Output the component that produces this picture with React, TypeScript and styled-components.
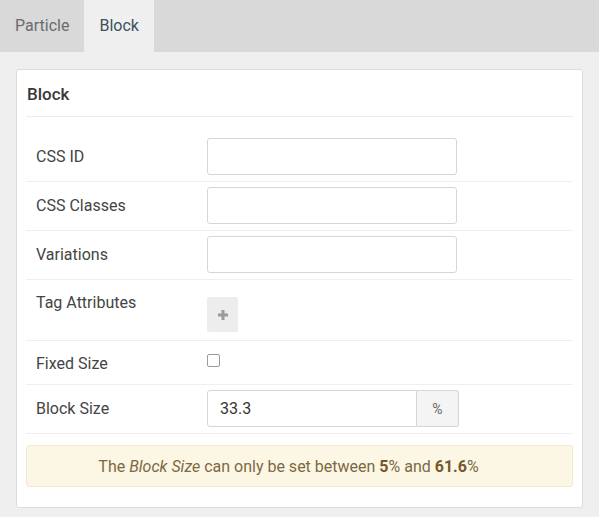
import styled, { createGlobalStyle } from 'styled-components';

const GlobalStyle = createGlobalStyle`
  html, body {
    margin: 0;
    padding: 0;
    background: #efefef;
    font-family: Roboto, "Liberation Sans", Arial, sans-serif;
  }
`;

const TabBar = styled.div`
  display: flex;
  height: 52px;
  background: #d9d9d9;
`;

const Tab = styled.div<{ $active?: boolean }>`
  padding: 0 15px;
  line-height: 52px;
  font-size: 16px;
  color: ${(p) => (p.$active ? '#3b4f5e' : '#6b6b6b')};
  background: ${(p) => (p.$active ? '#efefef' : 'transparent')};
`;

const Content = styled.div`
  padding: 17px 16px 10px;
`;

const Card = styled.div`
  background: #fff;
  border: 1px solid #dcdcdc;
  border-radius: 3px;
  padding: 0 9px 20px;
`;

const CardHeader = styled.div`
  height: 47px;
  display: flex;
  align-items: center;
  padding: 1px 0 0 1px;
  box-sizing: border-box;
  border-bottom: 1px solid #ebebeb;
  font-size: 17px;
  font-weight: 500;
  color: #383838;
`;

const Form = styled.div`
  padding-top: 16px;
`;

const Row = styled.div<{ $top?: boolean; $pad?: string }>`
  display: flex;
  align-items: ${(p) => (p.$top ? 'flex-start' : 'center')};
  padding: ${(p) => p.$pad || '5px 10px 6px'};
  border-bottom: 1px solid #efefef;
`;

const Label = styled.div`
  width: 171px;
  flex-shrink: 0;
  font-size: 16px;
  line-height: 20px;
  color: #444;
`;

const Input = styled.input`
  box-sizing: border-box;
  width: 250px;
  height: 37px;
  padding: 0 12px;
  border: 1px solid #d6d6d6;
  border-radius: 3px;
  font-family: inherit;
  font-size: 16px;
  color: #333;
  outline: none;
`;

const Group = styled.div`
  display: flex;
`;

const GroupInput = styled(Input)`
  width: 210px;
  border-radius: 3px 0 0 3px;
`;

const Addon = styled.div`
  box-sizing: border-box;
  width: 42px;
  height: 37px;
  display: flex;
  align-items: center;
  justify-content: center;
  background: #f4f4f4;
  border: 1px solid #d6d6d6;
  border-left: none;
  border-radius: 0 3px 3px 0;
  font-size: 14px;
  color: #666;
`;

const AddButton = styled.button`
  width: 31px;
  height: 35px;
  margin-top: 4px;
  display: flex;
  align-items: center;
  justify-content: center;
  background: #ededed;
  border: none;
  border-radius: 2px;
  padding: 0;
`;

const Check = styled.input`
  appearance: none;
  margin: 0;
  width: 13px;
  height: 13px;
  border: 1px solid #9a9a9a;
  border-radius: 2px;
  background: #fff;
`;

const Alert = styled.div`
  margin-top: 11px;
  box-sizing: border-box;
  height: 42px;
  display: flex;
  align-items: center;
  justify-content: center;
  padding-right: 22px;
  background: #fcf7e4;
  border: 1px solid #f3eacb;
  border-radius: 3px;
  font-size: 16px;
  color: #7c6843;

  em {
    font-style: italic;
    white-space: pre;
  }
  b {
    font-weight: 700;
    color: #76592a;
  }
`;

const App = () => (
  <>
    <GlobalStyle />
    <TabBar>
      <Tab>Particle</Tab>
      <Tab $active>Block</Tab>
    </TabBar>
    <Content>
      <Card>
        <CardHeader>Block</CardHeader>
        <Form>
          <Row>
            <Label>CSS ID</Label>
            <Input />
          </Row>
          <Row>
            <Label>CSS Classes</Label>
            <Input />
          </Row>
          <Row>
            <Label>Variations</Label>
            <Input />
          </Row>
          <Row $top $pad="13px 10px 8px">
            <Label>Tag Attributes</Label>
            <AddButton>
              <svg width="10" height="10" viewBox="0 0 10 10">
                <path d="M5 0v10M0 5h10" stroke="#9a9a9a" strokeWidth="3" />
              </svg>
            </AddButton>
          </Row>
          <Row $top $pad="13px 10px 10px">
            <Label>Fixed Size</Label>
            <Check type="checkbox" />
          </Row>
          <Row>
            <Label>Block Size</Label>
            <Group>
              <GroupInput defaultValue="33.3" />
              <Addon>%</Addon>
            </Group>
          </Row>
        </Form>
        <Alert>
          <span>
            The <em>Block Size</em> can only be set between <b>5</b>% and <b>61.6</b>%
          </span>
        </Alert>
      </Card>
    </Content>
  </>
);

export default App;
